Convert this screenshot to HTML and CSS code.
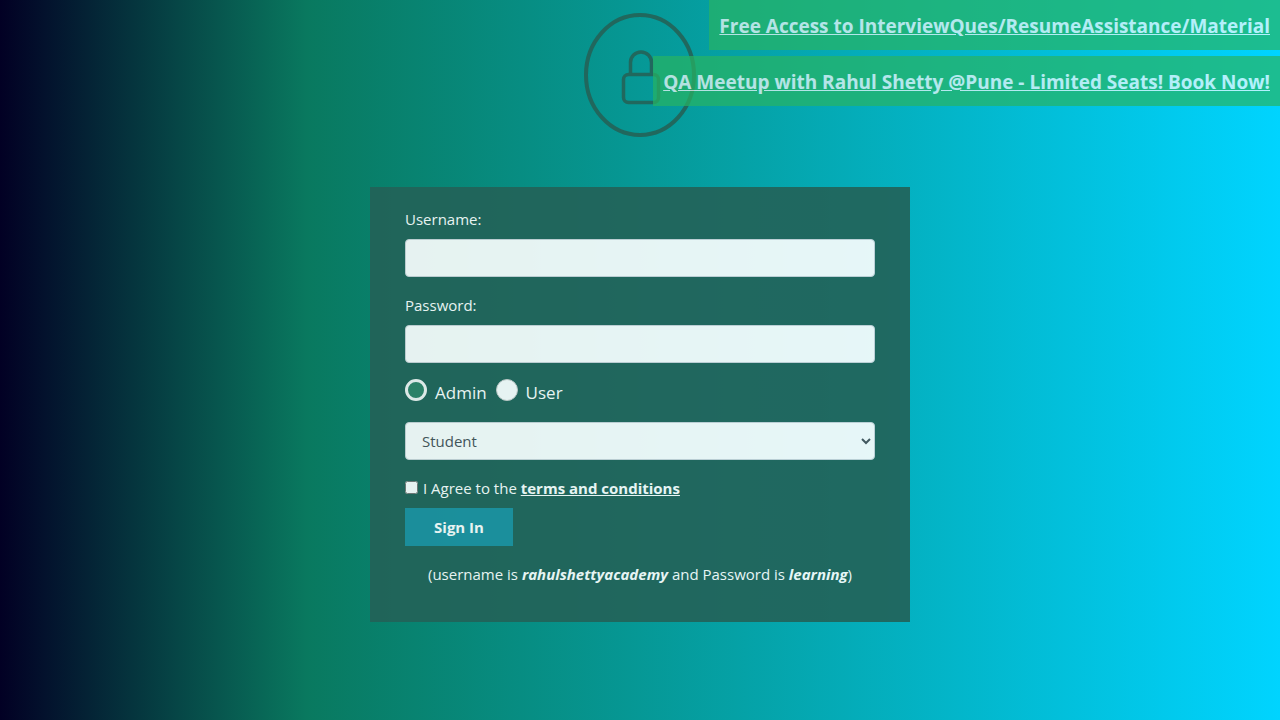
FILE: index.html
```html
<!DOCTYPE html>
<html lang="en">
<head>
<meta charset="utf-8">
<meta name="viewport" content="width=device-width, initial-scale=1">
<title>Login</title>
<link rel="stylesheet" href="styles.css">
</head>
<body>
<nav class="promos">
  <a class="promo" href="#material">Free Access to InterviewQues/ResumeAssistance/Material</a>
  <a class="promo" href="#meetup">QA Meetup with Rahul Shetty @Pune - Limited Seats! Book Now!</a>
</nav>
<main class="page">
  <svg class="logo" viewBox="0 0 112 124" width="112" height="124" fill="none" stroke="currentColor" stroke-width="4" aria-hidden="true">
    <ellipse cx="56" cy="62" rx="54" ry="60"/>
    <rect x="39.500" y="61.500" width="35" height="28" rx="5" stroke-width="3.500"/>
    <path d="M46.500 61V49.500a10.500 10.500 0 0 1 21 0V61" stroke-width="3.500"/>
  </svg>
  <form class="login">
    <label class="label" for="username">Username:</label>
    <input class="field" type="text" id="username">
    <label class="label" for="password">Password:</label>
    <input class="field" type="password" id="password">
    <div class="roles">
      <input class="radio" type="radio" name="role" id="admin" checked>
      <label class="role" for="admin">Admin</label>
      <input class="radio" type="radio" name="role" id="user">
      <label class="role" for="user">User</label>
    </div>
    <select class="field select" aria-label="Role">
      <option>Student</option>
      <option>Teacher</option>
      <option>Consultant</option>
    </select>
    <div class="agree">
      <input class="check" type="checkbox" id="terms">
      <label for="terms">I Agree to the <a class="terms" href="#terms">terms and conditions</a></label>
    </div>
    <button class="submit" type="button">Sign In</button>
    <p class="hint">(username is <b><i>rahulshettyacademy</i></b> and Password is <b><i>learning</i></b>)</p>
  </form>
</main>
</body>
</html>
```
FILE: styles.css
```css
* {
  box-sizing: border-box;
}

body {
  margin: 0;
  min-height: 100vh;
  font: 15px/24px "Open Sans", "Noto Sans", sans-serif;
  color: #fff;
  background: linear-gradient(90deg, #020024 0%, #09795f 24%, #00d4ff 100%);
}

.promos {
  position: absolute;
  z-index: 1;
  top: 0;
  right: 0;
  display: flex;
  flex-direction: column;
  align-items: flex-end;
  gap: 6px;
}

.promo {
  padding: 11px 10px 9px;
  font-size: 19px;
  line-height: 30px;
  font-weight: 700;
  color: #fff;
  background: #28b463;
  opacity: 0.7;
}

.page {
  display: flex;
  flex-direction: column;
  align-items: center;
  gap: 50px;
  padding-top: 13px;
}

.logo {
  color: #246358;
  opacity: 0.9;
}

.login {
  display: flex;
  flex-direction: column;
  width: 100%;
  max-width: 540px;
  padding: 20px 35px 36px;
  background: #236258;
  opacity: 0.9;
}

.label {
  margin-bottom: 8px;
}

.field {
  width: 100%;
  height: 38px;
  margin: 0 0 16px;
  padding: 6px 12px;
  font: inherit;
  color: #495057;
  background: #fff;
  border: 1px solid #ced4da;
  border-radius: 4px;
}

.roles {
  display: flex;
  align-items: center;
  height: 27px;
  margin-bottom: 16px;
}

.radio {
  appearance: none;
  width: 22px;
  height: 22px;
  margin: 0 8px 5px 0;
  border: 1px solid #ccc;
  border-radius: 50%;
  background: #fff;
}

.radio:checked {
  border: 3px solid #f4f4f4;
  background: #2f8168;
}

.role {
  margin-right: 9px;
  font-size: 17px;
}

.select {
  padding: 0 0 0 12px;
}

.agree {
  display: flex;
  align-items: center;
  margin-bottom: 8px;
}

.check {
  width: 13px;
  height: 13px;
  margin: 0 5px 1px 0;
}

.terms {
  font-weight: 700;
  color: inherit;
}

.submit {
  align-self: flex-start;
  width: 108px;
  height: 38px;
  padding: 0;
  font: inherit;
  font-weight: 700;
  color: inherit;
  background: #1e90a0;
  border: 0;
}

.hint {
  margin: 16px 0 0;
  text-align: center;
}
```
